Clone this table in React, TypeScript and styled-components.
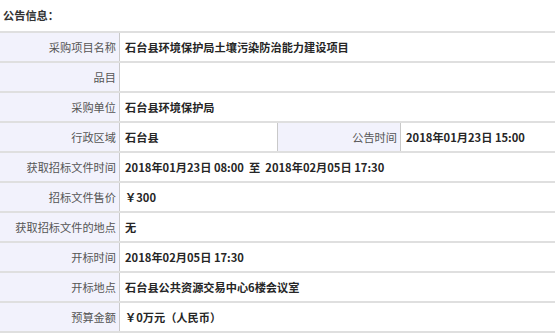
import React from "react";
import styled, { createGlobalStyle } from "styled-components";

const Global = createGlobalStyle`
  html, body { margin: 0; padding: 0; background: #fff; }
  body { font-family: "Microsoft YaHei", "Noto Sans CJK SC", "Noto Sans", sans-serif; }
`;

const Page = styled.div`
  width: 555px;
  overflow: hidden;
`;

const Title = styled.div`
  height: 31px;
  line-height: 30px;
  padding-left: 3px;
  font-size: 11.2px;
  font-weight: 700;
  color: #333;
`;

const Table = styled.div`
  border-top: 2px solid #dfdfdf;
  width: 555px;
`;

const Row = styled.div<{ $split?: boolean }>`
  display: grid;
  grid-template-columns: ${(p) => (p.$split ? "120px 158px 123px 1fr" : "120px 1fr")};
  height: 30px;
  border-bottom: 2px solid #dfdfdf;
  box-sizing: border-box;
`;

const Label = styled.div`
  background: #f2f2fc;
  border-right: 1px solid #c9c9c9;
  display: flex;
  align-items: center;
  justify-content: flex-end;
  padding-right: 3px;
  font-size: 11.2px;
  color: #555;
  white-space: nowrap;
`;

const Value = styled.div<{ $divider?: boolean }>`
  display: flex;
  align-items: center;
  padding-left: 5px;
  font-size: 11.2px;
  font-weight: 700;
  color: #262626;
  white-space: nowrap;
  border-right: ${(p) => (p.$divider ? "1px solid #c9c9c9" : "none")};
`;

const rows: [string, string][] = [
  ["采购项目名称", "石台县环境保护局土壤污染防治能力建设项目"],
  ["品目", ""],
  ["采购单位", "石台县环境保护局"],
];

const rows2: [string, string][] = [
  ["获取招标文件时间", "2018年01月23日 08:00\u00a0 至 \u00a02018年02月05日 17:30"],
  ["招标文件售价", "￥300"],
  ["获取招标文件的地点", "无"],
  ["开标时间", "2018年02月05日 17:30"],
  ["开标地点", "石台县公共资源交易中心6楼会议室"],
  ["预算金额", "￥0万元（人民币）"],
];

export default function App() {
  return (
    <Page>
      <Global />
      <Title>公告信息：</Title>
      <Table>
        {rows.map(([l, v]) => (
          <Row key={l}>
            <Label>{l}</Label>
            <Value>{v}</Value>
          </Row>
        ))}
        <Row $split>
          <Label>行政区域</Label>
          <Value $divider>石台县</Value>
          <Label>公告时间</Label>
          <Value>2018年01月23日 15:00</Value>
        </Row>
        {rows2.map(([l, v]) => (
          <Row key={l}>
            <Label>{l}</Label>
            <Value>{v}</Value>
          </Row>
        ))}
      </Table>
    </Page>
  );
}
